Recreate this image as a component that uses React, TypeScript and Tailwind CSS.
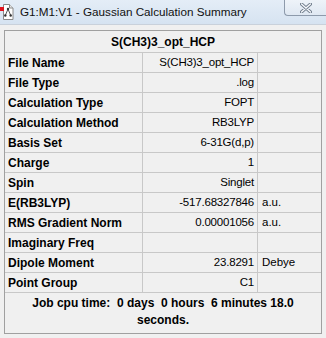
import React from "react";

type Row = { label: string; value: string; unit?: string };

const rows: Row[] = [
  { label: "File Name", value: "S(CH3)3_opt_HCP" },
  { label: "File Type", value: ".log" },
  { label: "Calculation Type", value: "FOPT" },
  { label: "Calculation Method", value: "RB3LYP" },
  { label: "Basis Set", value: "6-31G(d,p)" },
  { label: "Charge", value: "1" },
  { label: "Spin", value: "Singlet" },
  { label: "E(RB3LYP)", value: "-517.68327846", unit: "a.u." },
  { label: "RMS Gradient Norm", value: "0.00001056", unit: "a.u." },
  { label: "Imaginary Freq", value: "" },
  { label: "Dipole Moment", value: "23.8291", unit: "Debye" },
  { label: "Point Group", value: "C1" },
];

function AppIcon() {
  return (
    <svg width="15" height="16" viewBox="0 0 15 16" className="shrink-0">
      <path d="M3.5 0.5h6l3.5 3.5v11.5h-9.5z" fill="#ffffff" stroke="#8a8a8a" />
      <path d="M9.5 0.5v3.5h3.5" fill="#e6e6e6" stroke="#8a8a8a" />
      <path d="M8 5l-2.5 6M8 5l2.5 6" stroke="#555" strokeWidth="1" />
      <circle cx="8" cy="5" r="1.2" fill="#333" />
      <circle cx="5.3" cy="11.5" r="1.2" fill="#333" />
      <circle cx="10.7" cy="11.5" r="1.2" fill="#333" />
      <rect x="0" y="3" width="4" height="4" fill="#e0141e" />
    </svg>
  );
}

function CloseButton() {
  return (
    <div className="ml-auto self-start flex items-center justify-center w-[43px] h-[16px] -mr-[1px] rounded-bl-[4px] border-l border-b border-[#8d9aab] bg-gradient-to-b from-[#eef3f9] to-[#dfe8f2]">
      <svg width="12" height="10" viewBox="0 0 12 10">
        <path d="M1.5 1l9 8M10.5 1l-9 8" stroke="#6f7c8c" strokeWidth="3.2" strokeLinecap="round" />
        <path d="M1.5 1l9 8M10.5 1l-9 8" stroke="#f7f9fc" strokeWidth="1.4" strokeLinecap="round" />
      </svg>
    </div>
  );
}

export default function App() {
  return (
    <div
      className="w-[326px] h-[338px] flex flex-col overflow-hidden bg-[#f0f0f0]"
      style={{ fontFamily: '"Liberation Sans", Arial, sans-serif' }}
    >
      {/* title bar */}
      <div className="h-[25px] flex items-start bg-gradient-to-b from-[#e4edf7] to-[#d6e3f1] border-b border-[#c9d1db]">
        <div className="flex items-center h-[24px] gap-[5px]">
          <AppIcon />
          <span className="text-[11.7px] text-[#111] whitespace-nowrap">
            G1:M1:V1 - Gaussian Calculation Summary
          </span>
        </div>
        <CloseButton />
      </div>

      {/* client area */}
      <div className="flex-1 px-[4px] pt-[5px]">
        <div className="border border-[#a0a0a0] bg-[#f0f0f0] text-black">
          <div className="h-[22px] flex items-center justify-center border-b border-[#c8c8c8] text-[12px] font-bold">
            S(CH3)3_opt_HCP
          </div>
          {rows.map((r) => (
            <div key={r.label} className="grid grid-cols-[138px_115px_1fr] h-[20px] border-b border-[#c8c8c8]">
              <div className="flex items-center pl-[3px] border-r border-[#c8c8c8] text-[12px] font-bold whitespace-nowrap">
                {r.label}
              </div>
              <div className="flex items-center justify-end pr-[3px] border-r border-[#c8c8c8] text-[11.5px] tracking-[-0.2px] whitespace-nowrap">
                {r.value}
              </div>
              <div className="flex items-center pl-[4px] text-[11.5px]">{r.unit}</div>
            </div>
          ))}
          <div className="h-[40px] pt-[2px] text-center text-[12px] font-bold leading-[17px] whitespace-pre">
            {"Job cpu time:  0 days  0 hours  6 minutes 18.0\nseconds."}
          </div>
        </div>
      </div>
    </div>
  );
}
